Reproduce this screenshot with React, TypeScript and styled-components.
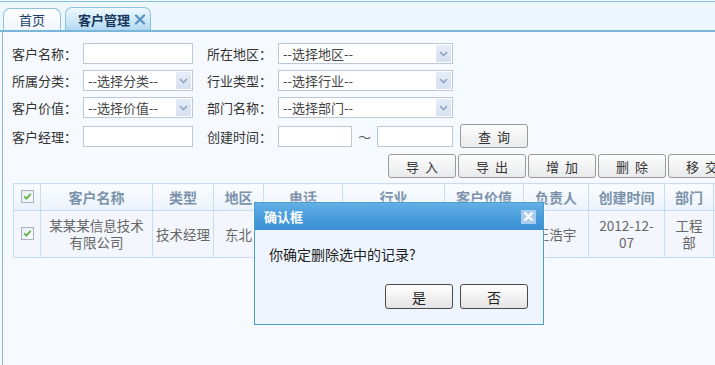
import React from "react";
import styled, { createGlobalStyle } from "styled-components";

const Global = createGlobalStyle`
  html, body { margin: 0; padding: 0; }
  body {
    width: 715px; height: 365px; overflow: hidden;
    background: #f6f9fe;
    font-family: "Noto Sans CJK SC", "Liberation Sans", sans-serif;
    font-size: 13px; color: #333;
  }
`;

const Page = styled.div`
  position: relative;
  width: 715px;
  height: 365px;
  overflow: hidden;
  padding-top: 1px;
  box-sizing: border-box;
  display: flex;
  flex-direction: column;
`;

const TabBar = styled.div`
  height: 28px;
  border-top: 1px solid #7fc4de;
  border-bottom: 2px solid #7ab6d8;
  background: #eef6ff;
  display: flex;
  align-items: flex-end;
  gap: 4px;
  padding-left: 3px;
`;

const Tab = styled.div<{ $active?: boolean }>`
  height: ${(p) => (p.$active ? 23 : 22)}px;
  padding: ${(p) => (p.$active ? "0 4px 0 12px" : "0 15px")};
  border: 1px solid #8cc2db;
  border-bottom: none;
  border-radius: 7px 7px 0 0;
  box-sizing: border-box;
  display: flex;
  align-items: center;
  gap: 4px;
  font-size: 13px;
  color: ${(p) => (p.$active ? "#17375e" : "#1d3f66")};
  font-weight: ${(p) => (p.$active ? 700 : 400)};
  background: ${(p) =>
    p.$active
      ? "linear-gradient(#eef8ff 0%, #cfe9f8 55%, #b1d9f2 100%)"
      : "linear-gradient(#ffffff 0%, #eef6fd 100%)"};
`;

const Panel = styled.div`
  flex: 1;
  margin-left: 2px;
  border-left: 1px solid #8ab8e0;
  background: #f6f9fe;
  padding: 11px 0 0 9px;
  display: flex;
  flex-direction: column;
`;

const Form = styled.div`
  display: grid;
  grid-template-columns: 71px 124px 71px auto;
  grid-template-rows: 21px 21px 21px 24px;
  row-gap: 6px;
  align-items: center;
`;

const Label = styled.div`
  font-size: 13px;
  color: #333;
  white-space: nowrap;
`;

const TextInput = styled.div<{ $w: number }>`
  width: ${(p) => p.$w}px;
  height: 21px;
  box-sizing: border-box;
  border: 1px solid #bcc8d6;
  background: #fff;
`;

const SelectBox = styled.div<{ $w: number }>`
  width: ${(p) => p.$w}px;
  height: 21px;
  box-sizing: border-box;
  border: 1px solid #bcc8d6;
  background: #fff;
  display: flex;
  align-items: center;
  justify-content: space-between;
  padding: 0 1px 0 4px;
  font-size: 13px;
  color: #444;
`;

const Arrow = styled.div`
  width: 15px;
  height: 17px;
  background: linear-gradient(#e6edf8, #d6e0f0);
  display: flex;
  align-items: center;
  justify-content: center;
`;

const DateRange = styled.div`
  display: flex;
  align-items: center;
`;

const Tilde = styled.span`
  width: 25px;
  text-align: center;
  color: #555;
  font-size: 13px;
`;

const Btn = styled.div`
  width: 68px;
  height: 24px;
  flex-shrink: 0;
  box-sizing: border-box;
  border: 1px solid #9a9a9a;
  border-radius: 3px;
  background: linear-gradient(#fdfdfd, #e9eaeb);
  display: flex;
  align-items: center;
  justify-content: center;
  font-size: 13px;
  letter-spacing: 6px;
  text-indent: 6px;
  color: #333;
`;

const QueryBtn = styled(Btn)`
  margin-left: 7px;
`;

const Toolbar = styled.div`
  display: flex;
  gap: 2px;
  margin: 6px 0 0 376px;
  width: 400px;
  flex-shrink: 0;
`;

const Table = styled.table`
  margin: 5px 0 0 1px;
  border-collapse: collapse;
  table-layout: fixed;
  width: 780px;
  flex-shrink: 0;
`;

const Col = styled.col<{ $w: number }>`
  width: ${(p) => p.$w}px;
`;

const Th = styled.th`
  height: 26px;
  border: 1px solid #c9dbee;
  background: linear-gradient(#fbfdff, #eaf2fb);
  color: #7b92aa;
  font-size: 14px;
  font-weight: 700;
  padding: 0;
  text-align: center;
  white-space: nowrap;
  overflow: hidden;
`;

const Td = styled.td<{ $pad?: number }>`
  height: 46px;
  border: 1px solid #c9dbee;
  background: #f3f7fd;
  color: #666;
  font-size: 13.5px;
  line-height: 17px;
  text-align: center;
  padding: 0 ${(p) => p.$pad ?? 6}px;
  overflow: hidden;
`;

const Dialog = styled.div`
  position: absolute;
  left: 254px;
  top: 202px;
  width: 290px;
  height: 123px;
  box-sizing: border-box;
  border: 1px solid #4b9dcc;
  background: #eef5fe;
  box-shadow: 0 0 3px rgba(255, 255, 255, 0.9);
  display: flex;
  flex-direction: column;
`;

const DialogTitle = styled.div`
  height: 27px;
  background: linear-gradient(#63afe5 0%, #4a9ddc 50%, #3a8fd3 100%);
  display: flex;
  align-items: center;
  justify-content: space-between;
  padding: 0 7px 0 9px;
  color: #fff;
  font-weight: 700;
  font-size: 13px;
`;

const CloseBox = styled.div`
  width: 15px;
  height: 14px;
  background: #a9cdee;
  display: flex;
  align-items: center;
  justify-content: center;
`;

const DialogBody = styled.div`
  flex: 1;
  display: flex;
  flex-direction: column;
  padding: 0 15px 0 14px;
`;

const Message = styled.div`
  margin-top: 14px;
  font-size: 14px;
  color: #222;
`;

const DialogActions = styled.div`
  margin-top: auto;
  margin-bottom: 15px;
  display: flex;
  justify-content: flex-end;
  gap: 7px;
`;

const DlgBtn = styled.div`
  width: 68px;
  height: 25px;
  box-sizing: border-box;
  border: 1px solid #4a4a4a;
  border-radius: 3px;
  background: linear-gradient(#ffffff, #e4e4e4);
  display: flex;
  align-items: center;
  justify-content: center;
  font-size: 14px;
  color: #222;
`;

const Chevron = () => (
  <svg width="9" height="6" viewBox="0 0 9 6">
    <path d="M1 1 L4.5 4.5 L8 1" fill="none" stroke="#8fa3c0" strokeWidth="1.6" />
  </svg>
);

const Check = () => (
  <svg width="13" height="13" viewBox="0 0 13 13">
    <defs>
      <linearGradient id="cbg" x1="0" y1="0" x2="1" y2="1">
        <stop offset="0" stopColor="#e9edf1" />
        <stop offset="1" stopColor="#fbfcfd" />
      </linearGradient>
    </defs>
    <rect x="0.5" y="0.5" width="12" height="12" fill="url(#cbg)" stroke="#a4b4c4" />
    <path d="M3.2 6.4 L5.4 8.6 L9.8 3.8" fill="none" stroke="#62b54a" strokeWidth="1.8" />
  </svg>
);

const TabClose = () => (
  <svg width="12" height="11" viewBox="0 0 12 11">
    <path d="M2 1.5 L10 9.5 M10 1.5 L2 9.5" stroke="#5f91c2" strokeWidth="2.4" strokeLinecap="round" />
  </svg>
);

const DlgClose = () => (
  <svg width="11" height="11" viewBox="0 0 11 11">
    <path d="M1.5 1.5 L9.5 9.5 M9.5 1.5 L1.5 9.5" stroke="#ffffff" strokeWidth="2.4" />
  </svg>
);

const Select = ({ w, text }: { w: number; text: string }) => (
  <SelectBox $w={w}>
    <span>{text}</span>
    <Arrow>
      <Chevron />
    </Arrow>
  </SelectBox>
);

const columns: [string, number][] = [
  ["", 27],
  ["客户名称", 112],
  ["类型", 61],
  ["地区", 50],
  ["电话", 79],
  ["行业", 102],
  ["客户价值", 79],
  ["负责人", 65],
  ["创建时间", 76],
  ["部门", 49],
  ["操作", 80],
];

export default function App() {
  return (
    <Page>
      <Global />
      <TabBar>
        <Tab>首页</Tab>
        <Tab $active>
          客户管理
          <TabClose />
        </Tab>
      </TabBar>
      <Panel>
        <Form>
          <Label>客户名称：</Label>
          <TextInput $w={110} />
          <Label>所在地区：</Label>
          <Select w={175} text="--选择地区--" />

          <Label>所属分类：</Label>
          <Select w={110} text="--选择分类--" />
          <Label>行业类型：</Label>
          <Select w={175} text="--选择行业--" />

          <Label>客户价值：</Label>
          <Select w={110} text="--选择价值--" />
          <Label>部门名称：</Label>
          <Select w={175} text="--选择部门--" />

          <Label>客户经理：</Label>
          <TextInput $w={110} />
          <Label>创建时间：</Label>
          <DateRange>
            <TextInput $w={74} />
            <Tilde>～</Tilde>
            <TextInput $w={76} />
            <QueryBtn>查询</QueryBtn>
          </DateRange>
        </Form>
        <Toolbar>
          <Btn>导入</Btn>
          <Btn>导出</Btn>
          <Btn>增加</Btn>
          <Btn>删除</Btn>
          <Btn>移交</Btn>
        </Toolbar>
        <Table>
          <colgroup>
            {columns.map(([, w], i) => (
              <Col key={i} $w={w} />
            ))}
          </colgroup>
          <thead>
            <tr>
              {columns.map(([name], i) => (
                <Th key={i}>{i === 0 ? <Check /> : name}</Th>
              ))}
            </tr>
          </thead>
          <tbody>
            <tr>
              <Td>
                <Check />
              </Td>
              <Td>某某某信息技术有限公司</Td>
              <Td $pad={1}>技术经理</Td>
              <Td>东北</Td>
              <Td>13800000000</Td>
              <Td>信息技术</Td>
              <Td>重要客户</Td>
              <Td>王浩宇</Td>
              <Td>2012-12-07</Td>
              <Td>工程部</Td>
              <Td>查看</Td>
            </tr>
          </tbody>
        </Table>
      </Panel>
      <Dialog>
        <DialogTitle>
          确认框
          <CloseBox>
            <DlgClose />
          </CloseBox>
        </DialogTitle>
        <DialogBody>
          <Message>你确定删除选中的记录?</Message>
          <DialogActions>
            <DlgBtn>是</DlgBtn>
            <DlgBtn>否</DlgBtn>
          </DialogActions>
        </DialogBody>
      </Dialog>
    </Page>
  );
}
